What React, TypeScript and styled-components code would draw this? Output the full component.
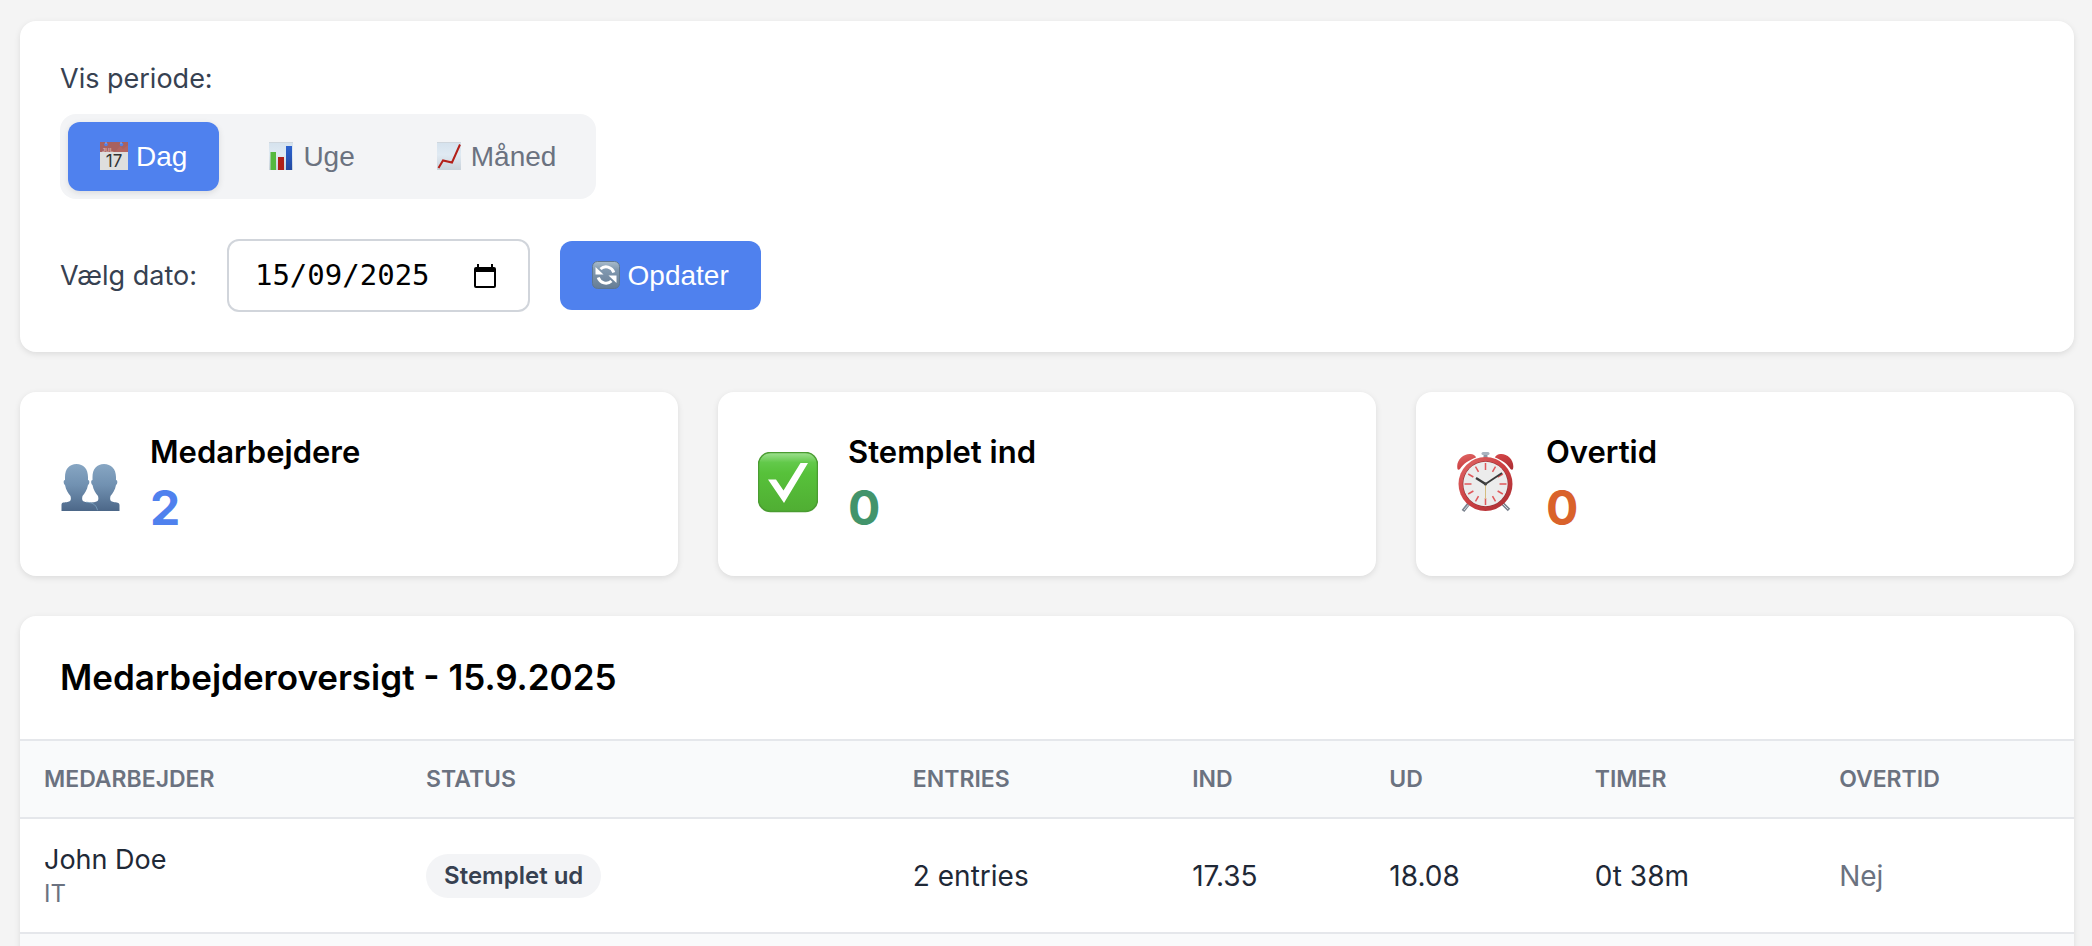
import React, { useState } from "react";
import styled, { createGlobalStyle } from "styled-components";

const sans = `Inter, "Liberation Sans", sans-serif`;
const buttonFont = `"Liberation Sans", Arial, sans-serif`;

const GlobalStyle = createGlobalStyle`
  *, *::before, *::after { box-sizing: border-box; }
  body {
    margin: 0;
    background: #f4f4f4;
    color: #000;
    font-family: ${sans};
    font-size: 28px;
  }
  h2, h3, p { margin: 0; }
`;

const Page = styled.main`
  display: flex;
  flex-direction: column;
  gap: 40px;
  padding: 21px 18px 40px 20px;
`;

const Card = styled.section`
  background: #fff;
  border-radius: 16px;
  box-shadow: 0 2px 6px rgba(0, 0, 0, 0.1);
`;

const Filters = styled(Card)`
  display: flex;
  flex-direction: column;
  align-items: flex-start;
  gap: 40px;
  padding: 40px;
`;

const Period = styled.div`
  display: flex;
  flex-direction: column;
  align-items: flex-start;
  gap: 18px;
`;

const PeriodLabel = styled.span`
  color: #374151;
  font-size: 27px;
  line-height: 35px;
`;

const Toggle = styled.div`
  display: flex;
  gap: 16px;
  padding: 8px;
  border-radius: 16px;
  background: #f3f4f6;
`;

const Button = styled.button<{ $primary?: boolean; $raised?: boolean }>`
  display: flex;
  align-items: center;
  gap: 8px;
  padding: 16px 32px;
  border: 0;
  border-radius: 12px;
  background: ${(p) => (p.$primary ? "#4f81ee" : "transparent")};
  box-shadow: ${(p) => (p.$raised ? "0 2px 6px rgba(0, 0, 0, 0.1)" : "none")};
  color: ${(p) => (p.$primary ? "#fff" : "#6b7280")};
  font-family: ${buttonFont};
  font-size: 28px;
  line-height: 37px;
  cursor: pointer;

  svg { margin-bottom: 2px; }
`;

const DateRow = styled.div`
  display: flex;
  flex-wrap: wrap;
  align-items: center;
  gap: 30px;
`;

const DateLabel = styled.label`
  color: #374151;
  font-size: 27px;
  line-height: 35px;
`;

const DateBox = styled.div`
  display: flex;
  align-items: center;
  justify-content: space-between;
  gap: 44px;
  padding: 16px 32px 16px 26px;
  border: 2px solid #d1d5db;
  border-radius: 12px;
  background: #fff;
`;

const DateInput = styled.input`
  width: 10ch;
  height: 37px;
  padding: 0;
  border: 0;
  outline: 0;
  background: transparent;
  color: #000;
  font-family: "DejaVu Sans Mono", "Liberation Mono", monospace;
  font-size: 29px;
  line-height: 37px;
`;

const PickerButton = styled.button`
  display: flex;
  padding: 0;
  border: 0;
  background: transparent;
  color: #000;
  cursor: pointer;
`;

const Stats = styled.div`
  display: grid;
  grid-template-columns: repeat(3, 1fr);
  gap: 40px;
`;

const StatCard = styled(Card)`
  display: flex;
  align-items: center;
  gap: 30px;
  padding: 40px;
`;

const StatText = styled.div`
  display: flex;
  flex-direction: column;
  gap: 8px;
`;

const StatTitle = styled.h3`
  font-size: 31px;
  font-weight: 600;
  line-height: 40px;
`;

const StatValue = styled.p<{ $color: string }>`
  color: ${(p) => p.$color};
  font-size: 48px;
  font-weight: 700;
  line-height: 56px;
`;

const Overview = styled(Card)`
  overflow: hidden;
`;

const OverviewTitle = styled.h2`
  padding: 40px;
  font-size: 35px;
  font-weight: 600;
  line-height: 43px;
`;

const Table = styled.table`
  width: 100%;
  border-collapse: separate;
  border-spacing: 0;
  table-layout: fixed;
  color: #1f2937;
`;

const Col = styled.col<{ $share: number }>`
  width: ${(p) => p.$share}%;
`;

const HeadCell = styled.th`
  padding: 24px;
  border-top: 2px solid #e5e7eb;
  border-bottom: 2px solid #e5e7eb;
  background: #f9fafb;
  color: #6b7280;
  font-size: 23px;
  font-weight: 600;
  line-height: 28px;
  text-align: left;
  text-transform: uppercase;
`;

const Row = styled.tr`
  &:nth-child(even) { background: #f9fafb; }
`;

const Cell = styled.td<{ $muted?: boolean }>`
  padding: 24px;
  border-bottom: 2px solid #e5e7eb;
  color: ${(p) => (p.$muted ? "#6b7280" : "#1f2937")};
  line-height: 34px;
  vertical-align: middle;
`;

const Name = styled.div`
  font-size: 27px;
`;

const Department = styled.div`
  margin-top: 2px;
  color: #6b7280;
  font-size: 24px;
  line-height: 29px;
`;

const Badge = styled.span`
  display: block;
  width: fit-content;
  padding: 8px 18px;
  border-radius: 24px;
  background: #f3f4f6;
  color: #374151;
  font-size: 24px;
  font-weight: 600;
  line-height: 28px;
`;

const CalendarEmoji = () => (
  <svg width="28" height="28" viewBox="0 0 28 28" aria-hidden="true">
    <rect width="28" height="28" fill="#dedede" />
    <rect width="28" height="10" fill="#a8615f" />
    <path d="M15 10 20 4l3 3 5-4v7z" fill="#b26562" />
    <circle cx="6" cy="2.500" r="1.800" fill="#4f81ee" />
    <circle cx="21.500" cy="2.500" r="1.800" fill="#4f81ee" />
    <path d="M6 0v2M21 0v2" stroke="#8fb0f0" strokeWidth="1" />
    <text x="2" y="9.500" fontFamily="Liberation Sans" fontSize="6" fontWeight="700" fill="#d6aaa8">JUL</text>
    <text x="14" y="25" textAnchor="middle" fontFamily="Inter, sans-serif" fontSize="17" fill="#333">17</text>
  </svg>
);

const paper = (id: string) => (
  <linearGradient id={id} x1="0" y1="0" x2="0" y2="1">
    <stop offset="0" stopColor="#d5e2ed" />
    <stop offset="0.45" stopColor="#e0eaf3" />
    <stop offset="1" stopColor="#c9d2da" />
  </linearGradient>
);

const BarsEmoji = () => (
  <svg width="28" height="28" viewBox="0 0 28 28" aria-hidden="true">
    <defs>
      {paper("barsPaper")}
      <linearGradient id="blueBar" x1="0" y1="0" x2="0" y2="1">
        <stop offset="0" stopColor="#2c62cf" />
        <stop offset="1" stopColor="#2349a0" />
      </linearGradient>
    </defs>
    <rect x="2" width="24" height="28" fill="url(#barsPaper)" />
    <path d="M2 .5h24" stroke="#cfd6dd" />
    <rect x="3.500" y="10" width="5.500" height="18" fill="#55b93e" />
    <rect x="11" y="15" width="6" height="13" fill="#b02018" />
    <rect x="19" y="4" width="6" height="24" fill="url(#blueBar)" />
  </svg>
);

const TrendEmoji = () => (
  <svg width="28" height="28" viewBox="0 0 28 28" aria-hidden="true">
    <defs>{paper("trendPaper")}</defs>
    <rect x="2" width="24" height="28" fill="url(#trendPaper)" />
    <path d="M2 .5h24" stroke="#cfd6dd" />
    <path d="M3.500 26 8 18.500l9 2L25 2.500" fill="none" stroke="#b32019" strokeWidth="2" />
  </svg>
);

const RefreshEmoji = () => (
  <svg width="28" height="28" viewBox="0 0 28 28" aria-hidden="true">
    <defs>
      <linearGradient id="refreshTile" x1="0" y1="0" x2="0" y2="1">
        <stop offset="0" stopColor="#a9bccb" />
        <stop offset="0.3" stopColor="#8199b0" />
        <stop offset="1" stopColor="#667d95" />
      </linearGradient>
    </defs>
    <rect x=".5" y=".5" width="27" height="27" rx="5" fill="url(#refreshTile)" stroke="#5e7690" />
    <g fill="none" stroke="#fff" strokeWidth="3">
      <path d="M8.500 8A8.200 8.200 0 0 1 21.800 11.500" />
      <path d="M19.500 20A8.200 8.200 0 0 1 6.200 16.500" />
    </g>
    <path d="M3.500 6v7.500h8z" fill="#fff" />
    <path d="M24.500 22v-7.500h-8z" fill="#fff" />
  </svg>
);

const PickerIcon = () => (
  <svg width="22" height="24" viewBox="0 0 22 24" aria-hidden="true">
    <path d="M3 0h2v3h12V0h2v3h1a2 2 0 0 1 2 2v17a2 2 0 0 1-2 2H2a2 2 0 0 1-2-2V5a2 2 0 0 1 2-2h1zM2 8v14h18V8z" fill="currentColor" fillRule="evenodd" />
  </svg>
);

const PeopleEmoji = () => (
  <svg width="60" height="64" viewBox="0 -2 60 64" aria-hidden="true">
    <defs>
      <linearGradient id="bust" gradientUnits="userSpaceOnUse" x1="0" y1="10" x2="0" y2="57">
        <stop offset="0" stopColor="#87a6c3" />
        <stop offset="0.45" stopColor="#7191b1" />
        <stop offset="1" stopColor="#4c6788" />
      </linearGradient>
    </defs>
    <path d="M44 10C51 10 56 15 56 23v3c2 0 1.500 4 0 5-1 5-3 8-5.500 11-1 4 0 5.500 3 6 3 .5 6 .5 6 3v6H29v-6c0-3 3-2.500 6-3 3-.5 4-2 3-6-2.500-3-4.500-6-5.500-11-1.500-1-2-5 0-5v-3C32.500 15 37 10 44 10z" fill="url(#bust)" />
    <path d="M16.500 10C23.500 10 28 15 28 23v3c2 0 1.500 4 0 5-1 5-3 8-5.500 11-1 4 0 5.500 3 6 4 .5 7 .5 9.500 3 2 2 2.500 4 2.500 6H1.500v-6c0-3 3-2.500 6-3 3-.5 4-2 3-6C8 39 6 36 5 31c-1.500-1-2-5 0-5v-3C5 15 9.500 10 16.500 10z" fill="url(#bust)" />
    <path d="M26 48.200c5 .3 10 1.300 11.500 8" fill="none" stroke="#7ba3c2" strokeWidth=".8" />
  </svg>
);

const CheckEmoji = () => (
  <svg width="60" height="64" viewBox="0 0 60 64" aria-hidden="true">
    <defs>
      <linearGradient id="greenTile" x1="0" y1="0" x2="0" y2="1">
        <stop offset="0" stopColor="#a0e191" />
        <stop offset="0.17" stopColor="#62c94a" />
        <stop offset="0.35" stopColor="#57c13a" />
        <stop offset="1" stopColor="#50ae33" />
      </linearGradient>
    </defs>
    <rect x=".5" y=".5" width="59" height="59" rx="12" fill="url(#greenTile)" stroke="#4a9c31" strokeWidth="1.500" />
    <path d="M10 27.500h8L25.500 38.500 42.500 11H50L26 51z" fill="#fff" />
  </svg>
);

const ClockEmoji = () => (
  <svg width="60" height="64" viewBox="0 0 60 64" aria-hidden="true">
    <defs>
      <linearGradient id="redMetal" x1="0" y1="0" x2="1" y2="1">
        <stop offset="0" stopColor="#e06a68" />
        <stop offset="0.5" stopColor="#cc3f42" />
        <stop offset="1" stopColor="#a92e33" />
      </linearGradient>
    </defs>
    <path d="M14 50 7 59M45 50l8 8" stroke="#7c8490" strokeWidth="3.500" />
    <path d="M14 51 8 58M46 51l6 6" stroke="#d9dde2" strokeWidth="1" />
    <rect x="25.500" y="0" width="8" height="3" rx="1.500" fill="#a9b3bf" />
    <path d="M27.500 3h4v5h-4z" fill="#8c96a3" />
    <path d="M1.500 17C-.5 8 8 1 15 2c3 .5 5 2 5 3.500C13 8 7 12 4 17c-.8 1-2.200 1-2.500 0zM57 17C59 8 51 1 44 2c-3 .5-5 2-5 3.500C46 8 51.500 12 54.500 17c.8 1 2.200 1 2.500 0z" fill="url(#redMetal)" />
    <circle cx="29.500" cy="32" r="27" fill="url(#redMetal)" />
    <circle cx="29.500" cy="32" r="22.800" fill="#8f3034" />
    <circle cx="29.500" cy="32" r="22.200" fill="#ececec" />
    <g stroke="#e0585b" strokeWidth="1.500">
      {Array.from({ length: 12 }, (_, i) => (
        <path key={i} d={i % 3 === 0 ? "M29.500 11v7" : "M29.500 12v6"} transform={`rotate(${i * 30} 29.500 32)`} />
      ))}
    </g>
    <path d="M29.500 31v16" stroke="#d5bd80" strokeWidth="1" />
    <path d="M29.500 32 20 26" stroke="#3a3a3a" strokeWidth="2.400" />
    <path d="M29.500 32 46 21" stroke="#3a3a3a" strokeWidth="1.700" />
    <circle cx="29.500" cy="32" r="1.600" fill="#444" />
  </svg>
);

const periods = [
  { id: "day", name: "Dag", Icon: CalendarEmoji },
  { id: "week", name: "Uge", Icon: BarsEmoji },
  { id: "month", name: "Måned", Icon: TrendEmoji },
];

const stats = [
  { title: "Medarbejdere", value: 2, color: "#4f81ee", Icon: PeopleEmoji },
  { title: "Stemplet ind", value: 0, color: "#42946b", Icon: CheckEmoji },
  { title: "Overtid", value: 0, color: "#d9622b", Icon: ClockEmoji },
];

const columns = [
  { name: "Medarbejder", share: 18.6 },
  { name: "Status", share: 23.7 },
  { name: "Entries", share: 13.6 },
  { name: "Ind", share: 9.6 },
  { name: "Ud", share: 10 },
  { name: "Timer", share: 11.9 },
  { name: "Overtid", share: 12.6 },
];

export default function App() {
  const [period, setPeriod] = useState("day");
  const [date, setDate] = useState("15/09/2025");

  return (
    <>
      <GlobalStyle />
      <Page>
        <Filters>
          <Period>
            <PeriodLabel id="period-label">Vis periode:</PeriodLabel>
            <Toggle role="group" aria-labelledby="period-label">
              {periods.map(({ id, name, Icon }) => (
                <Button
                  key={id}
                  type="button"
                  $primary={period === id}
                  $raised={period === id}
                  aria-pressed={period === id}
                  onClick={() => setPeriod(id)}
                >
                  <Icon />
                  {name}
                </Button>
              ))}
            </Toggle>
          </Period>
          <DateRow>
            <DateLabel htmlFor="date">Vælg dato:</DateLabel>
            <DateBox>
              <DateInput id="date" type="text" value={date} onChange={(e) => setDate(e.target.value)} />
              <PickerButton type="button" aria-label="Åbn kalender">
                <PickerIcon />
              </PickerButton>
            </DateBox>
            <Button type="button" $primary>
              <RefreshEmoji />
              Opdater
            </Button>
          </DateRow>
        </Filters>

        <Stats>
          {stats.map(({ title, value, color, Icon }) => (
            <StatCard key={title}>
              <Icon />
              <StatText>
                <StatTitle>{title}</StatTitle>
                <StatValue $color={color}>{value}</StatValue>
              </StatText>
            </StatCard>
          ))}
        </Stats>

        <Overview>
          <OverviewTitle>Medarbejderoversigt - 15.9.2025</OverviewTitle>
          <Table>
            <colgroup>
              {columns.map((c) => (
                <Col key={c.name} $share={c.share} />
              ))}
            </colgroup>
            <thead>
              <tr>
                {columns.map((c) => (
                  <HeadCell key={c.name} scope="col">{c.name}</HeadCell>
                ))}
              </tr>
            </thead>
            <tbody>
              <Row>
                <Cell>
                  <Name>John Doe</Name>
                  <Department>IT</Department>
                </Cell>
                <Cell><Badge>Stemplet ud</Badge></Cell>
                <Cell>2 entries</Cell>
                <Cell>17.35</Cell>
                <Cell>18.08</Cell>
                <Cell>0t 38m</Cell>
                <Cell $muted>Nej</Cell>
              </Row>
              <Row>
                <Cell colSpan={7} />
              </Row>
            </tbody>
          </Table>
        </Overview>
      </Page>
    </>
  );
}
